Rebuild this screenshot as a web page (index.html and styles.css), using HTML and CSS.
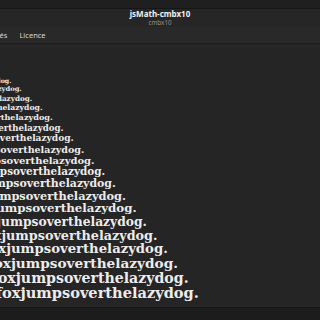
FILE: index.html
```html
<!DOCTYPE html>
<html lang="fr">
  <head>
    <meta charset="UTF-8">
    <meta name="viewport" content="width=device-width, initial-scale=1.0">
    <title>jsMath-cmbx10</title>
    <link rel="stylesheet" href="styles.css">
  </head>
  <body>
    <div class="window">
      <div class="topstrip"></div>

      <header class="headerbar">
        <div class="title">jsMath-cmbx10</div>
        <div class="subtitle">cmbx10</div>
      </header>

      <nav class="tabs">
        <span class="tab tab-cut">Propriétés</span>
        <span class="tab">Licence</span>
      </nav>

      <main class="preview">
        <div class="sample" style="--i:0">Thequickbrownfoxjumpsoverthelazydog.</div>
        <div class="sample" style="--i:1">Thequickbrownfoxjumpsoverthelazydog.</div>
        <div class="sample" style="--i:2">Thequickbrownfoxjumpsoverthelazydog.</div>
        <div class="sample" style="--i:3">Thequickbrownfoxjumpsoverthelazydog.</div>
        <div class="sample" style="--i:4">Thequickbrownfoxjumpsoverthelazydog.</div>
        <div class="sample" style="--i:5">Thequickbrownfoxjumpsoverthelazydog.</div>
        <div class="sample" style="--i:6">Thequickbrownfoxjumpsoverthelazydog.</div>
        <div class="sample" style="--i:7">Thequickbrownfoxjumpsoverthelazydog.</div>
        <div class="sample" style="--i:8">Thequickbrownfoxjumpsoverthelazydog.</div>
        <div class="sample" style="--i:9">Thequickbrownfoxjumpsoverthelazydog.</div>
        <div class="sample" style="--i:10">Thequickbrownfoxjumpsoverthelazydog.</div>
        <div class="sample" style="--i:11">Thequickbrownfoxjumpsoverthelazydog.</div>
        <div class="sample" style="--i:12">Thequickbrownfoxjumpsoverthelazydog.</div>
        <div class="sample" style="--i:13">Thequickbrownfoxjumpsoverthelazydog.</div>
        <div class="sample" style="--i:14">Thequickbrownfoxjumpsoverthelazydog.</div>
        <div class="sample" style="--i:15">Thequickbrownfoxjumpsoverthelazydog.</div>
        <div class="sample" style="--i:16">Thequickbrownfoxjumpsoverthelazydog.</div>
        <div class="sample" style="--i:17">Thequickbrownfoxjumpsoverthelazydog.</div>
        <div class="sample" style="--i:18">Thequickbrownfoxjumpsoverthelazydog.</div>
      </main>

      <footer class="bottomstrip"></footer>
    </div>
  </body>
</html>
```

FILE: styles.css
```css
body {
  margin: 0;
  background-color: #1e1e1e;
  font-family: "Noto Sans", "Open Sans", sans-serif;
}

.window {
  width: 320px;
  height: 320px;
  display: flex;
  flex-direction: column;
  overflow: hidden;
}

.topstrip {
  height: 8px;
  background-color: #1f1f1f;
  border-bottom: 1px solid #161616;
}

.headerbar {
  height: 18px;
  background-color: #262626;
  display: flex;
  flex-direction: column;
  align-items: center;
  justify-content: center;
  line-height: 1;
}

.title {
  color: #f0f0f0;
  font-size: 8px;
  font-weight: bold;
}

.subtitle {
  color: #8e8e8e;
  font-size: 6.3px;
  margin-top: 2px;
}

.tabs {
  height: 16px;
  background-color: #292929;
  border-bottom: 1px solid #1d1d1d;
  display: flex;
  align-items: center;
  gap: 12px;
  font-size: 7.5px;
  color: #d6d6d6;
}

.tab-cut {
  margin-left: -29px;
}

.preview {
  flex: 1;
  background-color: #252525;
  padding-top: 33px;
  overflow: hidden;
}

.sample {
  --size: calc(6.3px + var(--i) * 0.461px);
  font-family: "DejaVu Serif", serif;
  font-weight: bold;
  font-size: var(--size);
  line-height: calc(3.2px + var(--size) * 0.82);
  white-space: nowrap;
  color: #ececec;
  margin-left: -131px;
}

.bottomstrip {
  height: 12px;
  background-color: #1c1c1c;
  border-top: 1px solid #151515;
}
```
